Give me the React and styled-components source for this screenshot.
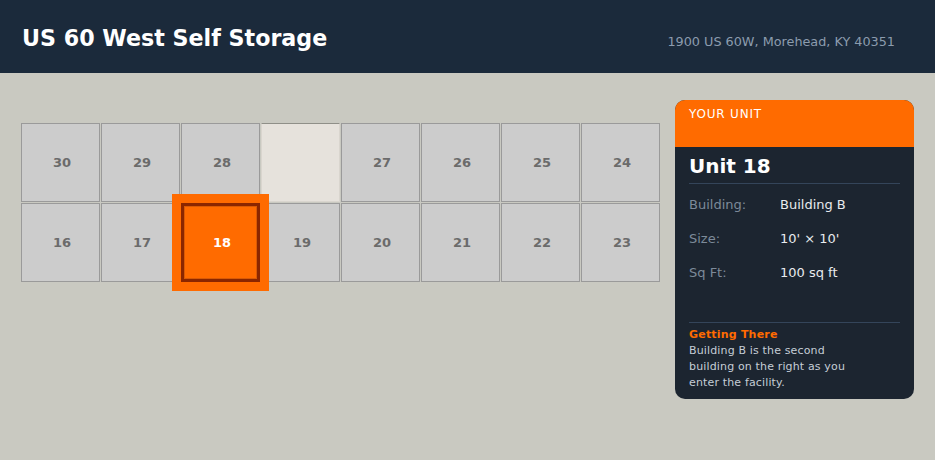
import React from 'react'
import styled, { createGlobalStyle } from 'styled-components'

const GlobalStyle = createGlobalStyle`
    html, body {
        margin: 0;
        padding: 0;
        background: #c9c9c1;
        font-family: "DejaVu Sans", "Noto Sans", sans-serif;
    }
`

const Page = styled.div`
    width: 935px;
    height: 460px;
    background: #c9c9c1;
    overflow: hidden;
`

const Header = styled.header`
    display: flex;
    justify-content: space-between;
    align-items: baseline;
    height: 73px;
    box-sizing: border-box;
    padding: 25px 40px 0 22px;
    background: #1b2a3b;
`

const Title = styled.h1`
    margin: 0;
    font-size: 22.2px;
    font-weight: bold;
    color: #ffffff;
`

const Address = styled.span`
    font-size: 12.8px;
    color: #8c9cae;
`

const Main = styled.main`
    display: flex;
    justify-content: space-between;
    padding: 27px 21px 0 21px;
`

const GridArea = styled.div`
    padding-top: 23px;
`

const UnitGrid = styled.div`
    display: grid;
    grid-template-columns: repeat(8, 79px);
    grid-auto-rows: 79px;
    column-gap: 1px;
    row-gap: 1px;
`

const Cell = styled.div`
    position: relative;
    display: flex;
    align-items: center;
    justify-content: center;
    box-sizing: border-box;
    padding-left: 3px;
    border: 1px solid #9a9a9a;
    background: #cccccc;
    color: #6b6b6b;
    font-size: 13px;
    font-weight: bold;

    &.empty{
        background: #e6e2dc;
        border-color: #d9d5ce;
        border-top-color: #8f8f88;
    }

    &.selected{
        z-index: 1;
        background: #ff6b00;
        border: 3px solid #8b2600;
        color: #ffffff;
        box-shadow: inset 0 0 0 1px #d95a05, 0 0 0 9px #ff6b00;
    }
`

const Panel = styled.aside`
    display: flex;
    flex-direction: column;
    width: 239px;
    height: 299px;
    border-radius: 10px;
    overflow: hidden;
    background: #1c2530;
`

const PanelHead = styled.div`
    height: 47px;
    box-sizing: border-box;
    padding: 7px 14px 0;
    background: #ff6b00;
    color: #ffffff;
    font-size: 12px;
    letter-spacing: 0.8px;
`

const PanelBody = styled.div`
    display: flex;
    flex-direction: column;
    flex: 1;
    padding: 7px 14px 8px;
`

const UnitName = styled.h2`
    margin: 0;
    padding-bottom: 5px;
    border-bottom: 1px solid #34455a;
    font-size: 20px;
    font-weight: bold;
    color: #ffffff;
`

const Details = styled.div`
    display: flex;
    flex-direction: column;
    gap: 19px;
    padding-top: 13px;
`

const Row = styled.div`
    display: flex;
    font-size: 13px;
    line-height: 15px;
`

const Label = styled.span`
    width: 91px;
    color: #7d8a99;
`

const Value = styled.span`
    color: #e8ebee;
`

const Directions = styled.div`
    margin-top: auto;
    padding-top: 5px;
    border-top: 1px solid #34455a;
`

const DirTitle = styled.div`
    font-size: 11px;
    font-weight: bold;
    color: #ff6b00;
    letter-spacing: 0.2px;
`

const DirText = styled.p`
    margin: 2px 0 0;
    max-width: 170px;
    font-size: 11px;
    line-height: 16px;
    letter-spacing: 0.15px;
    color: #c5cdd6;
`

const topRow = ['30', '29', '28', null, '27', '26', '25', '24']
const bottomRow = ['16', '17', '18', '19', '20', '21', '22', '23']

const App = () => {
    const selected = '18'
    const cells = [...topRow, ...bottomRow]

    return (
        <Page>
            <GlobalStyle />
            <Header>
                <Title>US 60 West Self Storage</Title>
                <Address>1900 US 60W, Morehead, KY 40351</Address>
            </Header>
            <Main>
                <GridArea>
                    <UnitGrid>
                        {
                            cells.map((num, i) => {
                                const cls = num === null ? 'empty' : num === selected ? 'selected' : ''
                                return (
                                    <Cell key={i} className={cls}>{num}</Cell>
                                )
                            })
                        }
                    </UnitGrid>
                </GridArea>
                <Panel>
                    <PanelHead>YOUR UNIT</PanelHead>
                    <PanelBody>
                        <UnitName>Unit 18</UnitName>
                        <Details>
                            <Row><Label>Building:</Label><Value>Building B</Value></Row>
                            <Row><Label>Size:</Label><Value>10' × 10'</Value></Row>
                            <Row><Label>Sq Ft:</Label><Value>100 sq ft</Value></Row>
                        </Details>
                        <Directions>
                            <DirTitle>Getting There</DirTitle>
                            <DirText>Building B is the second building on the right as you enter the facility.</DirText>
                        </Directions>
                    </PanelBody>
                </Panel>
            </Main>
        </Page>
    )
}

export default App
